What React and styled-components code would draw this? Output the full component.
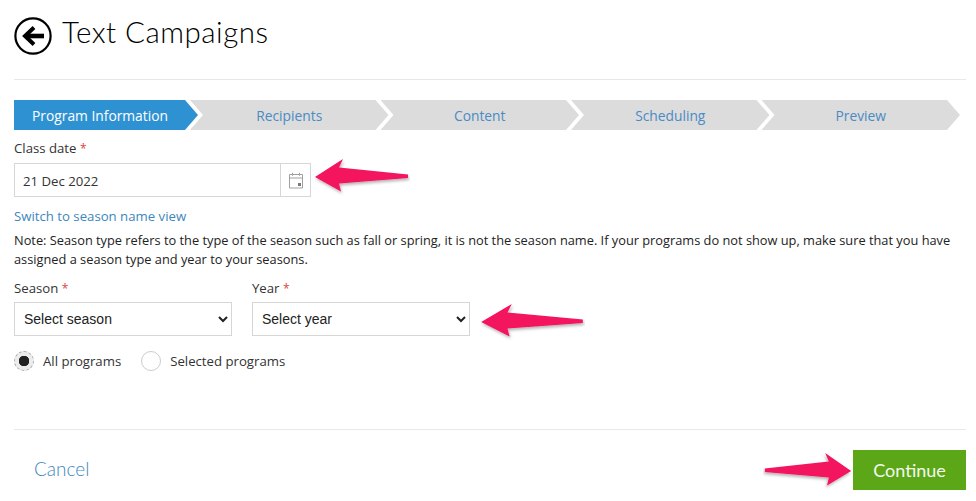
import React from "react";
import styled, { createGlobalStyle } from "styled-components";

const steps = ["Program Information", "Recipients", "Content", "Scheduling", "Preview"];

const BackIcon = () => (
  <svg width="38" height="38" viewBox="0 0 38 38">
    <circle cx="19" cy="19" r="17.6" fill="none" stroke="#000" strokeWidth="2.2" />
    <path d="M30 19H13" stroke="#000" strokeWidth="4.6" fill="none" />
    <path d="M20 10.5 11 19l9 8.5" stroke="#000" strokeWidth="4" fill="none" />
  </svg>
);

const CalendarIcon = () => (
  <svg width="16" height="17" viewBox="0 0 16 17">
    <path d="M1.5 2.5h13v13.5h-13zM1.5 6h13" fill="none" stroke="#a0a0a0" />
    <path d="M4.5 .8v3M11.5 .8v3" stroke="#a0a0a0" />
    <rect x="10" y="11" width="3" height="3" fill="#7a7a7a" />
  </svg>
);

const LeftArrow = ({ width = 97 }) => (
  <svg width={width} height="38" viewBox="0 0 97 38" preserveAspectRatio="none">
    <defs>
      <filter id="sh" x="-20%" y="-20%" width="140%" height="150%">
        <feDropShadow dx="1" dy="2" stdDeviation="1.5" floodColor="#000" floodOpacity="0.3" />
      </filter>
    </defs>
    <path d="M2 18 30 0l-4 8.500 69 7v3.500l-69 5.500 2 8z" fill="#f3125f" filter="url(#sh)" />
  </svg>
);

const App = () => {
  return (
    <Page>
      <GlobalStyle />
      <Header>
        <BackIcon />
        <Title>Text Campaigns</Title>
      </Header>

      <Stepper>
        {steps.map((step, index) => (
          <Step key={step} $active={index === 0}>
            {step}
          </Step>
        ))}
      </Stepper>

      <DateLabel>
        Class date <Star>*</Star>
      </DateLabel>
      <DateRow>
        <DateGroup>
          <DateValue>21 Dec 2022</DateValue>
          <DateAddon>
            <CalendarIcon />
          </DateAddon>
        </DateGroup>
        <DateArrow>
          <LeftArrow />
        </DateArrow>
      </DateRow>

      <SwitchLink>Switch to season name view</SwitchLink>
      <Note>
        Note: Season type refers to the type of the season such as fall or spring, it is not the season
        name. If your programs do not show up, make sure that you have assigned a season type and year to
        your seasons.
      </Note>

      <Fields>
        <Field>
          <Label>
            Season <Star>*</Star>
          </Label>
          <Select defaultValue="">
            <option value="">Select season</option>
          </Select>
        </Field>
        <Field>
          <Label>
            Year <Star>*</Star>
          </Label>
          <Select defaultValue="">
            <option value="">Select year</option>
          </Select>
          <YearArrow>
            <LeftArrow width={106} />
          </YearArrow>
        </Field>
      </Fields>

      <Radios>
        <RadioItem>
          <Radio $checked />
          All programs
        </RadioItem>
        <RadioItem>
          <Radio />
          Selected programs
        </RadioItem>
      </Radios>

      <Footer>
        <Cancel>Cancel</Cancel>
        <ContinueWrap>
          <ContinueArrow>
            <LeftArrow width={90} />
          </ContinueArrow>
          <Continue>Continue</Continue>
        </ContinueWrap>
      </Footer>
    </Page>
  );
};

export default App;

const GlobalStyle = createGlobalStyle`
  body {
    margin: 0;
    background: #fff;
    font-family: "Open Sans", "Noto Sans", sans-serif;
    color: #222;
  }
`;

const Page = styled.div`
  width: 952px;
  height: 501px;
  padding: 0 10px 0 14px;
  overflow: hidden;
  font-size: 13.2px;
`;

const Header = styled.div`
  display: flex;
  align-items: center;
  gap: 10px;
  height: 80px;
  padding-top: 17px;
  padding-bottom: 24px;
  box-sizing: border-box;
  border-bottom: 1px solid #e8e8e8;
`;

const Title = styled.h1`
  margin: 0 0 10px;
  font-family: "Lato", sans-serif;
  font-size: 29.5px;
  font-weight: 300;
  letter-spacing: 0.5px;
  color: #000;
`;

const Stepper = styled.div`
  display: flex;
  margin-top: 20px;
  height: 30px;
  width: 946px;
`;

const Step = styled.div`
  flex: ${(props) => (props.$active ? "0 0 184px" : "1 1 0")};
  box-sizing: border-box;
  padding-right: ${(props) => (props.$active ? "12px" : "0")};
  margin-right: -8px;
  display: flex;
  align-items: center;
  justify-content: center;
  font-size: 13.8px;
  background: ${(props) => (props.$active ? "#2e92d2" : "#dcdcdc")};
  color: ${(props) => (props.$active ? "#fff" : "#4a8bc4")};
  clip-path: ${(props) =>
    props.$active
      ? "polygon(0 0, calc(100% - 13px) 0, 100% 50%, calc(100% - 13px) 100%, 0 100%)"
      : "polygon(0 0, calc(100% - 13px) 0, 100% 50%, calc(100% - 13px) 100%, 0 100%, 13px 50%)"};
  &:last-child {
    margin-right: 0;
  }
`;

const Label = styled.div`
  height: 18px;
  font-size: 13.2px;
  line-height: 18px;
  color: #333;
  margin-bottom: 5px;
`;

const DateLabel = styled(Label)`
  margin-top: 9px;
  margin-bottom: 6px;
`;

const Star = styled.span`
  font-size: 12px;
  line-height: 1;
  color: #d9453f;
`;

const DateRow = styled.div`
  position: relative;
  width: 297px;
`;

const DateGroup = styled.div`
  display: flex;
  height: 34px;
  box-sizing: border-box;
  border: 1px solid #d6d6d6;
`;

const DateValue = styled.div`
  flex: 1;
  padding: 1px 0 0 8px;
  display: flex;
  align-items: center;
  font-size: 13.2px;
  color: #333;
`;

const DateAddon = styled.div`
  width: 29px;
  border-left: 1px solid #d6d6d6;
  display: flex;
  align-items: center;
  justify-content: center;
`;

const DateArrow = styled.div`
  position: absolute;
  left: 299px;
  top: -4px;
`;

const SwitchLink = styled.div`
  margin-top: 10px;
  font-size: 13.2px;
  line-height: 18px;
  color: #3d87bd;
`;

const Note = styled.p`
  margin: 6px 0 0;
  font-size: 12.8px;
  line-height: 19px;
  color: #222;
`;

const Fields = styled.div`
  display: flex;
  gap: 20px;
  margin-top: 10px;
`;

const Field = styled.div`
  position: relative;
  width: 218px;
`;

const Select = styled.select`
  width: 100%;
  height: 34px;
  padding: 0 5px;
  background: #fff;
  border: 1px solid #d6d6d6;
  border-radius: 0;
  font-family: "Liberation Sans", Arial, sans-serif;
  font-size: 14px;
  color: #222;
`;

const YearArrow = styled.div`
  position: absolute;
  left: 227px;
  top: 25px;
`;

const Radios = styled.div`
  display: flex;
  gap: 20px;
  margin-top: 15px;
`;

const RadioItem = styled.label`
  display: flex;
  align-items: center;
  gap: 9px;
  font-size: 13.2px;
  line-height: 20px;
  color: #333;
`;

const Radio = styled.span`
  width: 20px;
  height: 20px;
  box-sizing: border-box;
  border-radius: 50%;
  border: ${(props) => (props.$checked ? "1px dashed #aaa" : "1px solid #ccc")};
  background: ${(props) =>
    props.$checked ? "radial-gradient(circle, #222 0 5px, #ececec 5.5px)" : "#fff"};
`;

const Footer = styled.div`
  display: flex;
  align-items: center;
  justify-content: space-between;
  margin-top: 58px;
  border-top: 1px solid #e8e8e8;
  padding-top: 20px;
`;

const Cancel = styled.div`
  margin: 0 0 4px 20px;
  font-family: "Lato", sans-serif;
  font-size: 19px;
  font-weight: 300;
  color: #3d87bd;
`;

const ContinueWrap = styled.div`
  position: relative;
`;

const ContinueArrow = styled.div`
  position: absolute;
  left: -90px;
  top: 3px;
  transform: scaleX(-1);
`;

const Continue = styled.div`
  width: 113px;
  height: 40px;
  background: #5ba718;
  color: #f4f9ee;
  display: flex;
  align-items: center;
  justify-content: center;
  font-family: "Lato", sans-serif;
  font-size: 18px;
  font-weight: 400;
`;
